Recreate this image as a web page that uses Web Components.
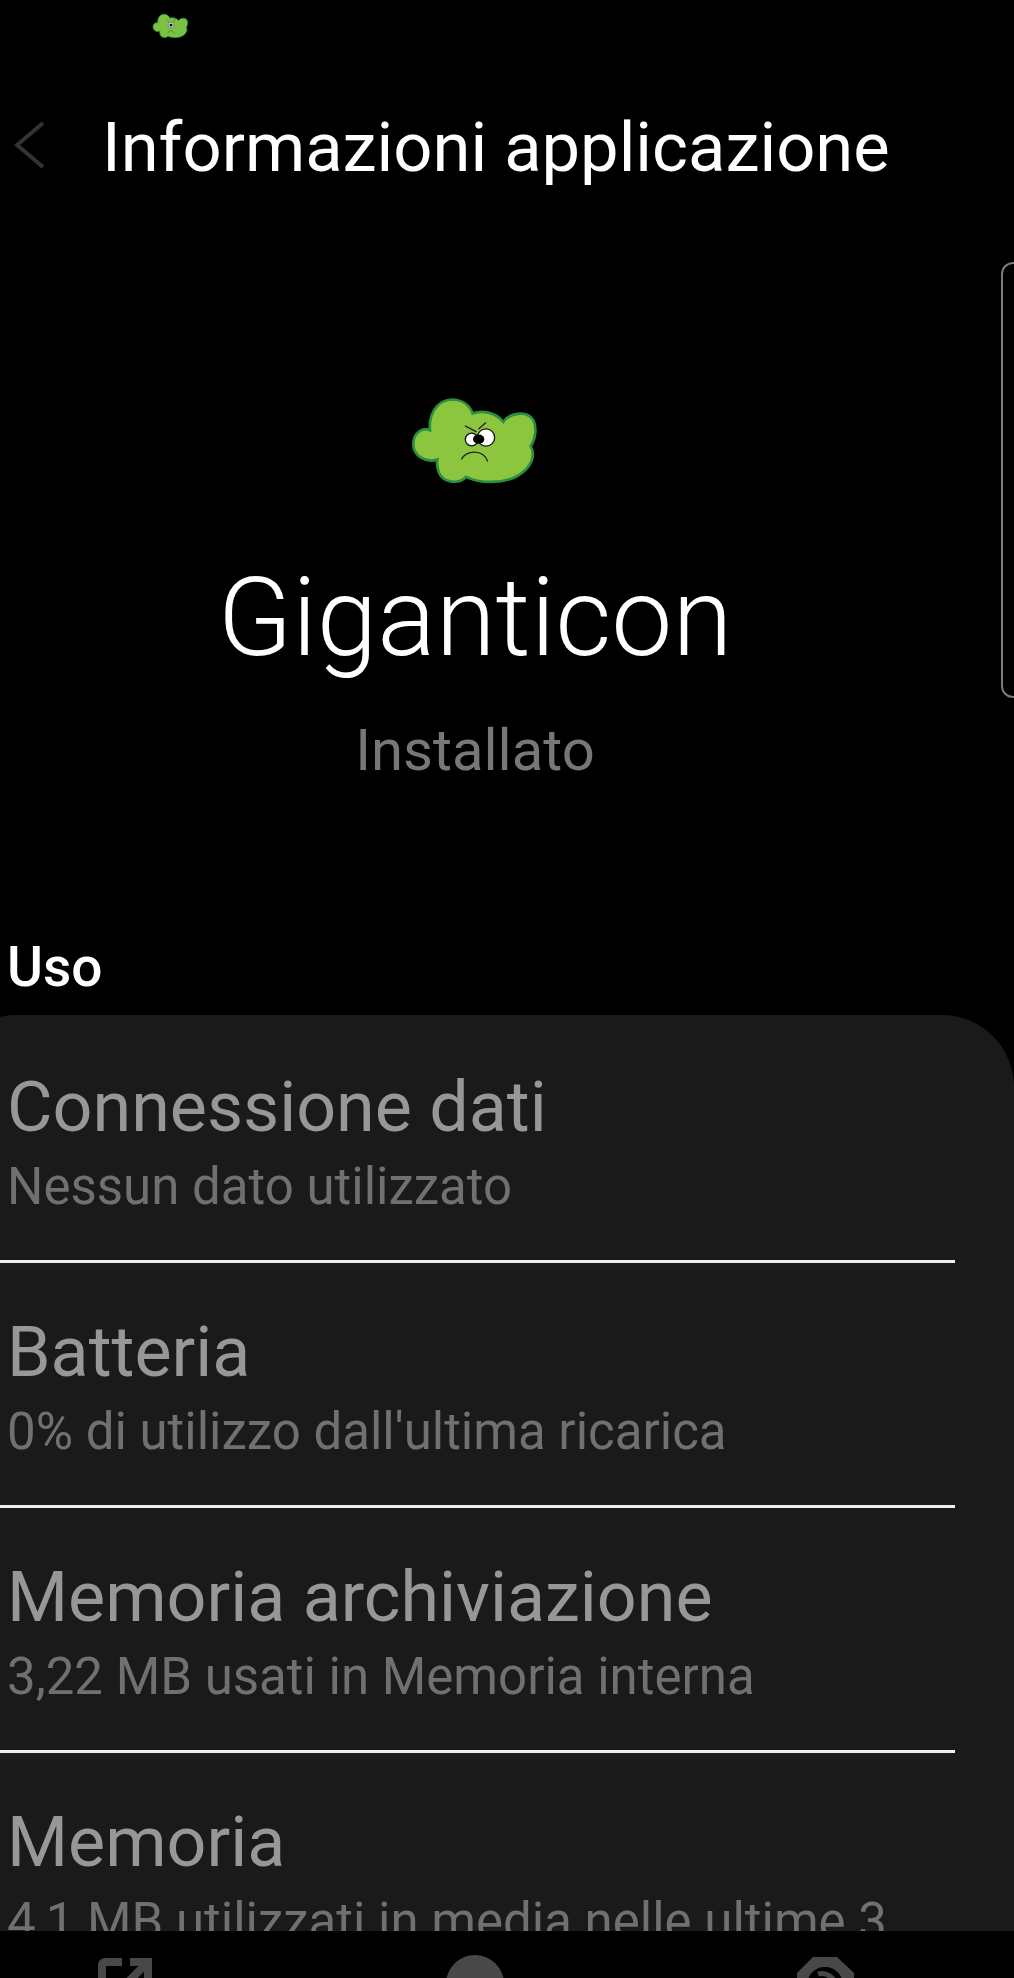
<!DOCTYPE html>
<html>
<head>
<meta charset="utf-8">
<title>Informazioni applicazione</title>
<style>
html, body { margin: 0; height: 100%; background: #000; }
body { font-family: Roboto, "Liberation Sans", sans-serif; overflow: hidden; }
</style>
</head>
<body>
<info-screen>
  <status-strip slot="status"></status-strip>
  <app-bar slot="bar">Informazioni applicazione</app-bar>
  <app-hero slot="hero" name="Giganticon" state="Installato"></app-hero>
  <section-label slot="label">Uso</section-label>
  <info-row slot="rows" sub="Nessun dato utilizzato">Connessione dati</info-row>
  <info-row slot="rows" sub="0% di utilizzo dall'ultima ricarica">Batteria</info-row>
  <info-row slot="rows" sub="3,22 MB usati in Memoria interna">Memoria archiviazione</info-row>
  <info-row slot="rows" sub="4,1 MB utilizzati in media nelle ultime 3 ore" last>Memoria</info-row>
  <bottom-actions slot="nav"></bottom-actions>
</info-screen>

<script>
const cloudPath = 'M150 180C146 140 165 90 215 88C250 88 270 108 278 130C305 120 345 125 370 155C385 130 440 118 460 150C472 175 465 210 452 228C468 255 455 290 415 316C370 342 300 340 258 320C240 342 190 340 177 308C170 290 170 280 172 268C135 280 100 255 100 222C100 188 128 170 150 180Z';

// big icon has the angry face, the status bar copy only shows one eye
const bigFace = `
  <circle cx="275" cy="208" r="19" fill="#fff" stroke="#111" stroke-width="4"/>
  <circle cx="318" cy="202" r="26" fill="#fff" stroke="#111" stroke-width="4"/>
  <ellipse cx="296" cy="207" rx="17" ry="14" fill="#000"/>
  <path d="M255 167L290 185M318 157L295 177M244 268C255 240 310 235 323 274" fill="none" stroke="#222" stroke-width="4"/>`;
const smallFace = `
  <circle cx="290" cy="202" r="30" fill="#fff" stroke="#222" stroke-width="5"/>
  <circle cx="290" cy="202" r="17" fill="#000"/>
  <path d="M245 145L272 172M340 140L312 170M255 290C265 255 315 255 325 295" fill="none" stroke="#3c6a22" stroke-width="6"/>`;

const cloudSvg = (face, fill) => `
<svg viewBox="90 75 390 275" width="100%" height="100%" style="display:block">
  <path d="${cloudPath}" fill="${fill}" stroke="#2a8f40" stroke-width="8"/>
  ${face}
</svg>`;

class InfoScreen extends HTMLElement {
  constructor() {
    super();
    this.attachShadow({ mode: 'open' }).innerHTML = `
      <style>
        :host { display: flex; flex-direction: column; height: 1978px; width: 1014px; position: relative; overflow: hidden; background: #000; color: #fff; }
        .card { flex: 1; min-height: 0; overflow: hidden; background: #1a1a1a; border-radius: 72px 72px 0 0; margin-left: -56px; padding-left: 56px; }
        .handle { position: absolute; left: 1001px; top: 262px; width: 40px; height: 432px; border: 2px solid #7a7a7a; border-radius: 12px; }
      </style>
      <slot name="status"></slot>
      <slot name="bar"></slot>
      <slot name="hero"></slot>
      <slot name="label"></slot>
      <div class="card"><slot name="rows"></slot></div>
      <slot name="nav"></slot>
      <div class="handle"></div>`;
  }
}

class StatusStrip extends HTMLElement {
  constructor() {
    super();
    this.attachShadow({ mode: 'open' }).innerHTML = `
      <style>
        :host { display: block; height: 52px; padding: 13px 0 0 152px; box-sizing: border-box; }
        .i { width: 37px; height: 26px; }
      </style>
      <div class="i">${cloudSvg(smallFace, '#7cc242')}</div>`;
  }
}

class AppBar extends HTMLElement {
  constructor() {
    super();
    this.attachShadow({ mode: 'open' }).innerHTML = `
      <style>
        :host { display: flex; align-items: center; height: 188px; box-sizing: border-box; padding: 2px 0 0 14px; }
        svg { width: 32px; height: 46px; flex: none; margin-bottom: 5px; }
        .t { margin-left: 56px; font-size: 68.7px; font-weight: 400; white-space: nowrap; }
      </style>
      <svg viewBox="0 0 32 46"><path d="M29 1L3 23L29 45" fill="none" stroke="#333" stroke-width="4"/></svg>
      <div class="t"><slot></slot></div>`;
  }
}

class AppHero extends HTMLElement {
  constructor() {
    super();
    this.attachShadow({ mode: 'open' }).innerHTML = `
      <style>
        :host { display: flex; flex-direction: column; align-items: center; height: 676px; box-sizing: border-box; padding-top: 155px; padding-right: 64px; }
        .i { width: 130px; height: 92px; }
        .n { margin-top: 70px; font-size: 109px; font-weight: 300; line-height: 122px; }
        .s { margin-top: 38px; font-size: 58px; line-height: 66px; color: #777; }
      </style>
      <div class="i">${cloudSvg(bigFace, '#8cc63f')}</div>
      <div class="n"></div>
      <div class="s"></div>`;
    this.shadowRoot.querySelector('.n').textContent = this.getAttribute('name');
    this.shadowRoot.querySelector('.s').textContent = this.getAttribute('state');
  }
}

class SectionLabel extends HTMLElement {
  constructor() {
    super();
    this.attachShadow({ mode: 'open' }).innerHTML = `
      <style>
        :host { display: block; height: 99px; padding: 21px 0 0 7px; box-sizing: border-box; font-size: 55px; font-weight: 500; line-height: 60px; }
      </style>
      <slot></slot>`;
  }
}

class InfoRow extends HTMLElement {
  constructor() {
    super();
    this.attachShadow({ mode: 'open' }).innerHTML = `
      <style>
        :host { display: block; height: 245px; box-sizing: border-box; padding: 54px 59px 0 7px; position: relative; }
        .line { position: absolute; left: 0; top: 245px; width: 955px; height: 3px; background: #eee; }
        :host([last]) .line { display: none; }
        .t { font-size: 70px; line-height: 76px; color: #979797; }
        .s { font-size: 51px; line-height: 60px; margin-top: 12px; color: #707070; }
      </style>
      <div class="t"><slot></slot></div>
      <div class="s"></div>
      <div class="line"></div>`;
    this.shadowRoot.querySelector('.s').textContent = this.getAttribute('sub');
  }
}

class BottomActions extends HTMLElement {
  constructor() {
    super();
    this.attachShadow({ mode: 'open' }).innerHTML = `
      <style>
        :host { display: flex; height: 47px; flex: none; background: #000; overflow: hidden; padding-top: 24px; box-sizing: border-box; }
        svg { flex: none; }
        .a { margin-left: 97px; }
        .b { margin-left: 293px; }
        .c { margin-left: 293px; margin-top: 2px; }
      </style>
      <svg class="a" width="56" height="56" viewBox="0 0 56 56"><path d="M25 7H9Q5 7 5 11V56M33 7H51V25M51 7L24 34" fill="none" stroke="#484848" stroke-width="8"/></svg>
      <svg class="b" width="58" height="58" viewBox="0 0 58 58"><circle cx="29" cy="29" r="29" fill="#484848"/></svg>
      <svg class="c" width="57" height="57" viewBox="0 0 57 57"><path d="M16 0H40L57 16V40L40 57H16L0 40V16Z" fill="#484848"/><circle cx="28" cy="28" r="18" fill="#000"/><path d="M21 17C28 15 34 19 38 24" fill="none" stroke="#484848" stroke-width="5"/></svg>`;
  }
}

customElements.define('info-screen', InfoScreen);
customElements.define('status-strip', StatusStrip);
customElements.define('app-bar', AppBar);
customElements.define('app-hero', AppHero);
customElements.define('section-label', SectionLabel);
customElements.define('info-row', InfoRow);
customElements.define('bottom-actions', BottomActions);
</script>
</body>
</html>
